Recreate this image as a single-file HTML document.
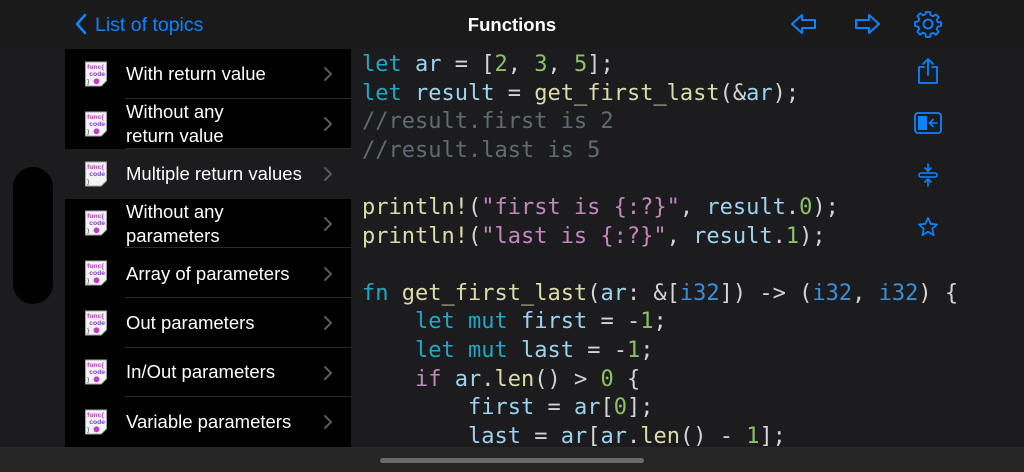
<!DOCTYPE html>
<html><head><meta charset="utf-8"><style>
*{margin:0;padding:0;box-sizing:border-box}
body{width:1024px;height:472px;overflow:hidden;background:#1c1c1e;position:relative;font-family:"Liberation Sans","DejaVu Sans",sans-serif;color:#fff}
.top{position:absolute;left:0;top:0;width:1024px;height:49px;background:#1a1a1a}
.back{position:absolute;left:95px;top:14px;color:#0a84ff;font-size:19.5px}
.title{position:absolute;left:0;width:1024px;text-align:center;top:14px;font-size:18.5px;font-weight:bold}
.list{position:absolute;left:65px;top:49px;width:286px;height:398px;background:#000}
.row{position:absolute;left:0;width:286px;height:50px}
.row.sel{background:#1c1c1e}
.row .t{position:absolute;left:61px;font-size:18.5px;line-height:24px;color:#fff}
.sep{position:absolute;left:60px;right:0;bottom:0;height:1px;background:#2a2a2c}
.code{position:absolute;left:362px;top:51px;font-family:"DejaVu Sans Mono",monospace;font-size:22px;line-height:28.6px;white-space:pre;color:#d4d4d4}
.k{color:#1fa8c4}.v{color:#9cd4f0}.n{color:#8cc265}.c{color:#5f6b73}.f{color:#dcdcaa}.s{color:#c586c0}.ty{color:#3b8fd6}.p{color:#c586c0}
.bot{position:absolute;left:0;top:447px;width:1024px;height:25px;background:#262626}
.home{position:absolute;left:380px;top:458px;width:264px;height:5px;border-radius:3px;background:#6b6b6b}
.pill{position:absolute;left:13px;top:167px;width:40px;height:137px;border-radius:20px;background:#000}
</style></head><body>
<div class="top">
<svg style="position:absolute;left:74px;top:13px" width="14" height="22" viewBox="0 0 14 22"><path d="M11 2 L3 11 L11 20" fill="none" stroke="#0a84ff" stroke-width="2.6" stroke-linecap="round" stroke-linejoin="round"/></svg>
<div class="back">List of topics</div>
<div class="title">Functions</div>
<svg style="position:absolute;left:790px;top:12px" width="28" height="24" viewBox="0 0 28 24"><path d="M2 12 L12 3 L12 8 L25 8 L25 16 L12 16 L12 21 Z" fill="none" stroke="#0a84ff" stroke-width="2" stroke-linejoin="round"/></svg>
<svg style="position:absolute;left:853px;top:12px" width="28" height="24" viewBox="0 0 28 24"><path d="M26 12 L16 3 L16 8 L3 8 L3 16 L16 16 L16 21 Z" fill="none" stroke="#0a84ff" stroke-width="2" stroke-linejoin="round"/></svg>
<svg style="position:absolute;left:914px;top:10px" width="28" height="28" viewBox="0 0 28 28"><g fill="none" stroke="#0a84ff" stroke-width="1.8"><path d="M12 2h4l.7 3.3 2.4 1 2.8-1.9 2.8 2.8-1.9 2.8 1 2.4L27 12v4l-3.3.7-1 2.4 1.9 2.8-2.8 2.8-2.8-1.9-2.4 1L16 27h-4l-.7-3.3-2.4-1-2.8 1.9-2.8-2.8 1.9-2.8-1-2.4L1 16v-4l3.3-.7 1-2.4-1.9-2.8 2.8-2.8 2.8 1.9 2.4-1z" stroke-linejoin="round"/><circle cx="14" cy="14" r="4.5"/></g></svg>
</div>
<div class="pill"></div>
<div class="list">
<div class="row" style="top:0"><div class="t" style="top:13px">With return value</div><div class="sep"></div></div>
<div class="row" style="top:50px"><div class="t" style="top:1px">Without any<br>return value</div><div class="sep"></div></div>
<div class="row sel" style="top:100px"><div class="t" style="top:13px">Multiple return values</div></div>
<div class="row" style="top:149px"><div class="t" style="top:2px">Without any<br>parameters</div><div class="sep"></div></div>
<div class="row" style="top:199px"><div class="t" style="top:14px">Array of parameters</div><div class="sep"></div></div>
<div class="row" style="top:249px"><div class="t" style="top:13px">Out parameters</div><div class="sep"></div></div>
<div class="row" style="top:298px"><div class="t" style="top:13px">In/Out parameters</div><div class="sep"></div></div>
<div class="row" style="top:348px"><div class="t" style="top:13px">Variable parameters</div></div>
</div>
<div class="code"><span class="k">let</span> <span class="v">ar</span> = [<span class="n">2</span>, <span class="n">3</span>, <span class="n">5</span>];
<span class="k">let</span> <span class="v">result</span> = <span class="f">get_first_last</span>(&amp;<span class="v">ar</span>);
<span class="c">//result.first is 2</span>
<span class="c">//result.last is 5</span>

<span class="f">println!</span>(<span class="s">"first is {:?}"</span>, <span class="v">result</span>.<span class="n">0</span>);
<span class="f">println!</span>(<span class="s">"last is {:?}"</span>, <span class="v">result</span>.<span class="n">1</span>);

<span class="k">fn</span> <span class="f">get_first_last</span>(<span class="v">ar</span>: &amp;[<span class="ty">i32</span>]) -&gt; (<span class="ty">i32</span>, <span class="ty">i32</span>) {
    <span class="k">let</span> <span class="k">mut</span> <span class="v">first</span> = -<span class="n">1</span>;
    <span class="k">let</span> <span class="k">mut</span> <span class="v">last</span> = -<span class="n">1</span>;
    <span class="p">if</span> <span class="v">ar</span>.<span class="f">len</span>() &gt; <span class="n">0</span> {
        <span class="v">first</span> = <span class="v">ar</span>[<span class="n">0</span>];
        <span class="v">last</span> = <span class="v">ar</span>[<span class="v">ar</span>.<span class="f">len</span>() - <span class="n">1</span>];</div>
<svg style="position:absolute;left:916px;top:57px" width="24" height="28" viewBox="0 0 24 28"><g fill="none" stroke="#0a84ff" stroke-width="1.8" stroke-linecap="round" stroke-linejoin="round"><path d="M8 10H3v16h18V10h-5"/><path d="M12 18V2M7 7l5-5 5 5"/></g></svg>
<svg style="position:absolute;left:914px;top:112px" width="28" height="22" viewBox="0 0 28 22"><rect x="1" y="1" width="26" height="20" rx="3" fill="none" stroke="#0a84ff" stroke-width="1.8"/><rect x="4" y="4" width="9" height="14" fill="#0a84ff"/><path d="M23 11h-7M19 7.5 15.5 11 19 14.5" fill="none" stroke="#0a84ff" stroke-width="1.6" stroke-linecap="round"/></svg>
<svg style="position:absolute;left:917px;top:163px" width="22" height="24" viewBox="0 0 22 24"><g fill="none" stroke="#0a84ff" stroke-width="1.6" stroke-linecap="round"><path d="M11 1v7M8 5l3 3 3-3M11 23v-7M8 19l3-3 3 3"/><rect x="2" y="10" width="18" height="4" rx="2"/></g></svg>
<svg style="position:absolute;left:917px;top:216px" width="22" height="22" viewBox="0 0 24 24"><path d="M12 2l2.9 6.6 7.1.6-5.4 4.7 1.6 7L12 17.2 5.8 20.9l1.6-7L2 9.2l7.1-.6z" fill="none" stroke="#0a84ff" stroke-width="1.8" stroke-linejoin="round"/></svg>
<div class="bot"></div><div class="home"></div>
<div>
<svg style="position:absolute;left:84px;top:60px" width="24" height="28" viewBox="0 0 23 26"><g id="ic"><path d="M1.5 1.5h20v18l-5 5h-15z" fill="#f4f4f4" stroke="#aaa"/><text x="3" y="8" font-size="6.5" fill="#c040c0" font-family="Liberation Sans,sans-serif" font-weight="bold">func{</text><text x="5" y="15" font-size="6.5" fill="#8040c0" font-family="Liberation Sans,sans-serif" font-weight="bold">code</text><text x="3" y="22" font-size="6" fill="#333" font-family="Liberation Sans,sans-serif">}</text><circle cx="12" cy="20" r="2.8" fill="#c040c0"/></g></svg>
<svg style="position:absolute;left:84px;top:110px" width="24" height="28" viewBox="0 0 23 26"><use href="#ic"/></svg>
<svg style="position:absolute;left:84px;top:160px" width="24" height="28" viewBox="0 0 23 26"><path d="M1.5 1.5h20v18l-5 5h-15z" fill="#f4f4f4" stroke="#aaa"/><text x="3" y="8" font-size="6.5" fill="#c040c0" font-family="Liberation Sans,sans-serif" font-weight="bold">func{</text><text x="5" y="15" font-size="6.5" fill="#8040c0" font-family="Liberation Sans,sans-serif" font-weight="bold">code</text><text x="3" y="22" font-size="6" fill="#333" font-family="Liberation Sans,sans-serif">}</text></svg>
<svg style="position:absolute;left:84px;top:209px" width="24" height="28" viewBox="0 0 23 26"><use href="#ic"/></svg>
<svg style="position:absolute;left:84px;top:259px" width="24" height="28" viewBox="0 0 23 26"><use href="#ic"/></svg>
<svg style="position:absolute;left:84px;top:309px" width="24" height="28" viewBox="0 0 23 26"><use href="#ic"/></svg>
<svg style="position:absolute;left:84px;top:358px" width="24" height="28" viewBox="0 0 23 26"><use href="#ic"/></svg>
<svg style="position:absolute;left:84px;top:408px" width="24" height="28" viewBox="0 0 23 26"><use href="#ic"/></svg>
<svg style="position:absolute;left:323px;top:66px" width="10" height="16" viewBox="0 0 10 16"><path d="M2 2l6 6-6 6" fill="none" stroke="#5a5a5e" stroke-width="2" stroke-linecap="round"/></svg>
<svg style="position:absolute;left:323px;top:116px" width="10" height="16" viewBox="0 0 10 16"><path d="M2 2l6 6-6 6" fill="none" stroke="#5a5a5e" stroke-width="2" stroke-linecap="round"/></svg>
<svg style="position:absolute;left:323px;top:166px" width="10" height="16" viewBox="0 0 10 16"><path d="M2 2l6 6-6 6" fill="none" stroke="#5a5a5e" stroke-width="2" stroke-linecap="round"/></svg>
<svg style="position:absolute;left:323px;top:216px" width="10" height="16" viewBox="0 0 10 16"><path d="M2 2l6 6-6 6" fill="none" stroke="#5a5a5e" stroke-width="2" stroke-linecap="round"/></svg>
<svg style="position:absolute;left:323px;top:266px" width="10" height="16" viewBox="0 0 10 16"><path d="M2 2l6 6-6 6" fill="none" stroke="#5a5a5e" stroke-width="2" stroke-linecap="round"/></svg>
<svg style="position:absolute;left:323px;top:315px" width="10" height="16" viewBox="0 0 10 16"><path d="M2 2l6 6-6 6" fill="none" stroke="#5a5a5e" stroke-width="2" stroke-linecap="round"/></svg>
<svg style="position:absolute;left:323px;top:365px" width="10" height="16" viewBox="0 0 10 16"><path d="M2 2l6 6-6 6" fill="none" stroke="#5a5a5e" stroke-width="2" stroke-linecap="round"/></svg>
<svg style="position:absolute;left:323px;top:414px" width="10" height="16" viewBox="0 0 10 16"><path d="M2 2l6 6-6 6" fill="none" stroke="#5a5a5e" stroke-width="2" stroke-linecap="round"/></svg>
</div>
</body></html>
